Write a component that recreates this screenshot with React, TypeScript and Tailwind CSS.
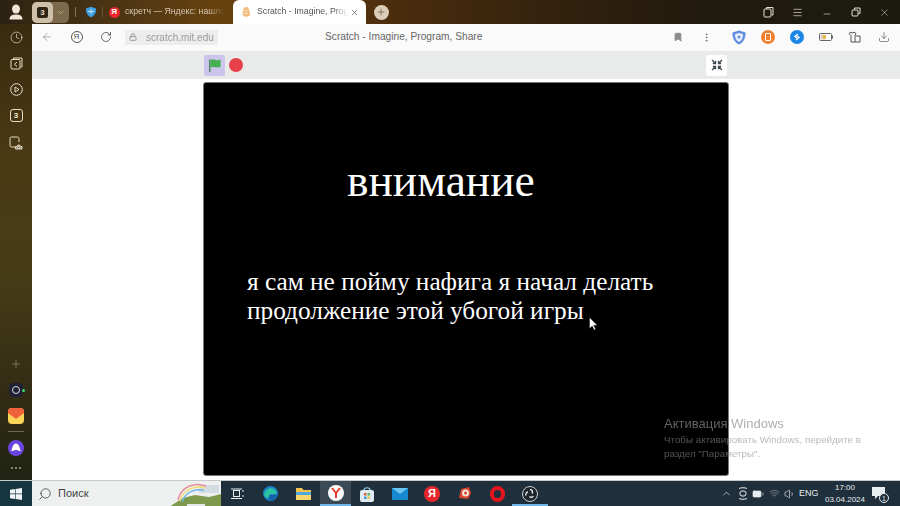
import React from "react";
import { ArrowLeft, RotateCw, Lock, Bookmark, MoreVertical, Download, X, Plus, Minus, Menu, ChevronDown, ChevronUp, Clock, Search, Volume1, Wifi, Battery } from "lucide-react";

function Slot({ w, children, className = "" }: { w: string; children?: React.ReactNode; className?: string }) {
  return <div className={`flex items-center justify-center shrink-0 ${w} ${className}`}>{children}</div>;
}

function SideIcon({ h, children }: { h: string; children: React.ReactNode }) {
  return <div className={`flex items-center justify-center w-full ${h}`}>{children}</div>;
}

function TabBar() {
  return (
    <div className="flex items-stretch h-6 shrink-0 bg-[linear-gradient(90deg,#2c2212_0%,#4a3414_12%,#66420f_24%,#5c3a10_34%,#4a2c0e_44%,#2e1f0d_66%,#1f1a0e_80%,#1c1a10_100%)] text-[#e8e2d6] font-['Liberation_Sans',sans-serif]">
      <Slot w="w-8">
        <svg width="14" height="16" viewBox="0 0 14 16">
          <ellipse cx="7" cy="5" rx="4" ry="4.6" fill="#efe6d8" />
          <path d="M0.5 15.5c0-4 3-5 6.5-5s6.500 1 6.500 5z" fill="#efe6d8" />
        </svg>
      </Slot>
      <div className="flex items-center h-[21px] mt-[2px] w-[37px] rounded-[5px] bg-[#7d6a4c]">
        <div className="w-[21px] h-full rounded-[5px] bg-[#cdbfa8] flex items-center justify-center">
          <span className="w-[11px] h-[11px] rounded-[2px] bg-[#2e2415] text-[#e8dcc8] text-[8px] font-bold flex items-center justify-center">3</span>
        </div>
        <ChevronDown size={9} strokeWidth={2} className="ml-[3px] text-[#cbbda6]" />
      </div>
      <div className="w-px h-[10px] self-center ml-[6px] bg-[#8a7450]" />
      <Slot w="w-[30px]">
        <svg width="12" height="12" viewBox="0 0 12 12">
          <path d="M1 2.500 6 .7l5 1.800c.2 4.200-1.300 7.200-5 8.800C2.300 9.700.800 6.700 1 2.500z" fill="#3fa0df" />
          <path d="M3 5.500h6M6 3v5" stroke="#bfe3f7" strokeWidth="1" />
        </svg>
      </Slot>
      <div className="w-px h-[10px] self-center ml-[-4px] bg-[#6d5230]" />
      <Slot w="w-[22px]">
        <span className="w-[11px] h-[11px] rounded-full bg-[#e8262b] text-white text-[8px] font-bold flex items-center justify-center">Я</span>
      </Slot>
      <div className="flex items-center w-[99px] overflow-hidden whitespace-nowrap text-[8.700px] text-[#d8c8b4] [mask-image:linear-gradient(90deg,#000_85%,transparent)]">скретч — Яндекс: нашлось</div>
      <div className="w-[9px]" />
      <div className="flex items-center w-[133px] h-full rounded-t-[6px] bg-white text-[#555] text-[8.700px] overflow-hidden">
        <svg width="10" height="12" viewBox="0 0 10 12" className="ml-[8px] mr-[6px] shrink-0">
          <path d="M3 1.500 7 1l1.500 4L9 9.500 5 11 1.500 9l.5-4z" fill="#f0bb7c" />
          <path d="M3 5h4M3 7.500h4" stroke="#fbe3c4" strokeWidth="1" />
        </svg>
        <span className="w-[91px] overflow-hidden whitespace-nowrap [mask-image:linear-gradient(90deg,#000_85%,transparent)]">Scratch - Imagine, Program, Share</span>
        <X size={9} strokeWidth={1.8} className="ml-[2px] text-[#555] shrink-0" />
      </div>
      <Slot w="w-[30px]">
        <span className="flex items-center justify-center w-[15px] h-[15px] rounded-full bg-[#dccdb9]">
          <Plus size={10} strokeWidth={1.5} className="text-[#5c4a34]" />
        </span>
      </Slot>
      <div className="flex-1" />
      <div className="flex items-center pr-[1px]">
        <Slot w="w-[29px]">
          <svg width="11" height="12" viewBox="0 0 11 12" fill="none" stroke="#e6e0d4" strokeWidth="1">
            <path d="M3.500 3V1.500h6.500v7.500H8.500" />
            <rect x="1" y="3" width="7" height="8" rx="1" />
          </svg>
        </Slot>
        <Slot w="w-[29px]"><Menu size={11} strokeWidth={1.5} className="text-[#e6e0d4]" /></Slot>
        <Slot w="w-[29px]"><Minus size={10} strokeWidth={1.5} className="text-[#e6e0d4] mt-[3px]" /></Slot>
        <Slot w="w-[29px]">
          <svg width="10" height="10" viewBox="0 0 10 10" fill="none" stroke="#e6e0d4" strokeWidth="1">
            <path d="M3.500 2.500V1h5.500v5.500H7.500" />
            <rect x="1" y="3" width="6" height="6" rx="1" />
          </svg>
        </Slot>
        <Slot w="w-[29px]"><X size={11} strokeWidth={1.2} className="text-[#e6e0d4]" /></Slot>
      </div>
    </div>
  );
}

function Sidebar() {
  const c = "text-[#e6dcc4]";
  return (
    <div className="w-8 shrink-0 flex flex-col bg-[linear-gradient(180deg,#3a2a10_0%,#4a3a14_30%,#473c18_55%,#2f2a14_85%,#1f2412_100%)]">
      <SideIcon h="h-[26px]"><Clock size={13} strokeWidth={1.3} className={c} /></SideIcon>
      <SideIcon h="h-[26px]">
        <svg width="13" height="13" viewBox="0 0 13 13" fill="none" stroke="#e6dcc4" strokeWidth="1">
          <path d="M3.500 2V1h8.500v9h-1.500" />
          <rect x="1" y="2.500" width="9" height="9.500" rx="1" />
          <path d="M7 5 4.500 7.300 7 9.500" />
        </svg>
      </SideIcon>
      <SideIcon h="h-[26px]">
        <svg width="13" height="13" viewBox="0 0 13 13" fill="none" stroke="#e6dcc4" strokeWidth="1">
          <circle cx="6.500" cy="6.500" r="5.800" />
          <path d="M5 4v5l4-2.500z" />
        </svg>
      </SideIcon>
      <SideIcon h="h-[27px]">
        <span className="w-[13px] h-[13px] rounded-[3px] border border-[#e6dcc4] text-[#f0e8d4] text-[8px] font-bold font-['Liberation_Sans',sans-serif] flex items-center justify-center">3</span>
      </SideIcon>
      <SideIcon h="h-[27px]">
        <svg width="14" height="14" viewBox="0 0 14 14" fill="none" stroke="#e6dcc4" strokeWidth="1">
          <path d="M6 11H2.500a1.500 1.500 0 0 1-1.500-1.500V2.500A1.500 1.500 0 0 1 2.500 1h6A1.500 1.500 0 0 1 10 2.500V6" />
          <path d="M6.500 13v-2.500h1.500l1-1.500h1.500l1 1.500H13V13z" fill="#8f8a7a" />
          <circle cx="9.800" cy="11.300" r="1" fill="#2a2614" />
        </svg>
      </SideIcon>
      <div className="flex-1" />
      <SideIcon h="h-[26px]"><Plus size={12} strokeWidth={1} className="text-[#b5ae96]" /></SideIcon>
      <SideIcon h="h-[26px]">
        <span className="relative flex items-center justify-center w-[14px] h-[14px] rounded-[4px] bg-[#1f2130]">
          <span className="w-[8px] h-[8px] rounded-full border-[1.5px] border-[#d9dcec]" />
          <span className="absolute right-[-2px] w-[3px] h-[3px] rounded-full bg-[#3cd96b]" />
        </span>
      </SideIcon>
      <SideIcon h="h-[25px]">
        <svg width="16" height="16" viewBox="0 0 16 16">
          <rect width="16" height="16" rx="4" fill="#fbd45a" />
          <path d="M0 4a4 4 0 0 1 4-4h8a4 4 0 0 1 4 4v1l-8 6-8-6z" fill="#f0603a" />
        </svg>
      </SideIcon>
      <div className="w-[16px] h-px self-center bg-[#6b6a50] my-[3px]" />
      <SideIcon h="h-[26px]">
        <svg width="16" height="16" viewBox="0 0 16 16">
          <circle cx="8" cy="8" r="8" fill="#6a46e0" />
          <path d="M8 3.500c2.300 0 3.500 3 4.500 7 .2.800-.5 1-1 .6C10.500 10.400 9.300 10 8 10s-2.500.400-3.500 1.100c-.5.400-1.200.2-1-.6 1-4 2.200-7 4.500-7z" fill="#fff" />
        </svg>
      </SideIcon>
      <SideIcon h="h-[14px]">
        <span className="flex gap-[2px]">
          <span className="w-[2px] h-[2px] rounded-full bg-[#a8a48e]" />
          <span className="w-[2px] h-[2px] rounded-full bg-[#a8a48e]" />
          <span className="w-[2px] h-[2px] rounded-full bg-[#a8a48e]" />
        </span>
      </SideIcon>
      <div className="h-[5px]" />
    </div>
  );
}

function Toolbar() {
  return (
    <div className="flex items-center h-[26px] shrink-0 bg-[#fafafa] rounded-tl-[5px] rounded-tr-[5px] font-['Liberation_Sans',sans-serif]">
      <Slot w="w-[30px]"><ArrowLeft size={12} strokeWidth={1} className="text-[#666]" /></Slot>
      <Slot w="w-[29px]">
        <span className="w-[12px] h-[12px] rounded-full border border-[#555] text-[#555] text-[8px] flex items-center justify-center">Я</span>
      </Slot>
      <Slot w="w-[29px]"><RotateCw size={12} strokeWidth={1.4} className="text-[#333]" /></Slot>
      <div className="flex items-center w-[93px] h-[15px] ml-[5px] bg-[#ededed] text-[#9a9a9a] text-[10px] whitespace-nowrap">
        <Lock size={8} strokeWidth={2.5} className="ml-[4px] mr-[9px] text-[#8d8d8d]" />
        <span className="blur-[0.4px]">scratch.mit.edu</span>
      </div>
      <div className="w-[107px]" />
      <span className="text-[10.200px] text-[#666] w-[159px] whitespace-nowrap">Scratch - Imagine, Program, Share</span>
      <div className="flex-1" />
      <Slot w="w-[29px]"><Bookmark size={10} strokeWidth={2} fill="#8a8a8a" className="text-[#8a8a8a]" /></Slot>
      <Slot w="w-[29px]"><MoreVertical size={11} strokeWidth={1.5} className="text-[#555]" /></Slot>
      <div className="w-[3px]" />
      <Slot w="w-[29px]">
        <svg width="14" height="15" viewBox="0 0 14 15">
          <path d="M7 .5 13.500 2.500c.3 5.500-2 10-6.500 12C2.500 12.500.200 8 .500 2.500z" fill="#5f8be0" />
          <path d="M7 3 11 4.200c.1 3.600-1.200 6.500-4 7.900C4.200 10.700 2.900 7.800 3 4.200z" fill="#e8effb" />
          <circle cx="7" cy="7" r="1.500" fill="#5f8be0" />
        </svg>
      </Slot>
      <Slot w="w-[29px]">
        <span className="w-[14px] h-[14px] rounded-full bg-[#ef8233] flex items-center justify-center">
          <span className="w-[6px] h-[8px] rounded-[1px] border-[1.5px] border-white" />
        </span>
      </Slot>
      <Slot w="w-[29px]">
        <span className="w-[14px] h-[14px] rounded-full bg-[#1a86e8] flex items-center justify-center">
          <svg width="8" height="8" viewBox="0 0 8 8" fill="none" stroke="#fff" strokeWidth="1.400">
            <path d="M5 1 2 3.500 4 5M3 7l3-2.500L4 3" />
          </svg>
        </span>
      </Slot>
      <Slot w="w-[29px]">
        <svg width="14" height="8" viewBox="0 0 14 8">
          <rect x=".5" y=".5" width="12" height="7" rx="1" fill="#fff" stroke="#666" />
          <rect x="1.500" y="1.500" width="5" height="5" fill="#d9d2c2" />
          <rect x="4" y="2.500" width="3" height="3" fill="#f0b428" />
          <rect x="13" y="2.500" width="1" height="3" fill="#666" />
        </svg>
      </Slot>
      <Slot w="w-[29px]">
        <svg width="13" height="13" viewBox="0 0 13 13" fill="none" stroke="#555" strokeWidth="1">
          <path d="M1 2.500 3 1l1 1h1l1-1 2 1.500-1 2v6.500H3V4.500z" />
          <path d="M7.500 5H12v6H7" />
        </svg>
      </Slot>
      <Slot w="w-[29px]"><Download size={12} strokeWidth={1.2} className="text-[#444]" /></Slot>
      <div className="w-[2px]" />
    </div>
  );
}

function Controls() {
  return (
    <div className="flex items-center h-[29px] shrink-0 bg-[#e9ebeb] border-t border-[#f8f8f8] pl-[172px] pr-[173px]">
      <div className="flex items-center justify-center w-[21px] h-[21px] rounded-[2px] bg-[#cbc5ec]">
        <svg width="15" height="15" viewBox="0 0 15 15">
          <path d="M2 1.500h1.500V14H2z" fill="#4d8a63" />
          <path d="M3.500 2c3-1.300 5 1 8 0l2-.5v7.500c-3 1.300-6.500-.8-10 .5z" fill="#45b04f" />
        </svg>
      </div>
      <div className="w-[14px] h-[14px] ml-[4px] rounded-full bg-[#e8404a]" />
      <div className="flex-1" />
      <div className="flex items-center justify-center w-[21px] h-[21px] rounded-[2px] bg-white">
        <svg width="12" height="12" viewBox="0 0 12 12" fill="none" stroke="#3c4a50" strokeWidth="1.300">
          <path d="M1 1l3.500 3.500M4.500 1.800v2.700H1.800M11 1 7.500 4.500M7.500 1.800v2.700h2.700M1 11l3.500-3.500M4.500 10.200V7.500H1.800M11 11 7.500 7.500M7.500 10.200V7.500h2.700" />
        </svg>
      </div>
    </div>
  );
}

function Stage() {
  return (
    <div className="relative flex-1 bg-white pt-[3px] pb-[4px] pl-[171px] pr-[171px] min-h-0">
      <div className="relative h-full w-full rounded-[3px] bg-black border border-[#777] font-['Liberation_Serif',serif] text-white">
        <div className="pt-[75px] pl-[143px] text-[45.500px] leading-[46px]">внимание</div>
        <div className="pt-[63px] pl-[43px] text-[25.300px] leading-[28.500px] whitespace-nowrap">
          <div>я сам не пойму нафига я начал делать</div>
          <div>продолжение этой убогой игры</div>
        </div>
        <svg width="9" height="14" viewBox="0 0 9 14" className="absolute left-[385px] top-[234px]">
          <path d="M.5.500v11l2.700-2.500 1.800 4 1.600-.7-1.800-4h3.500z" fill="#fff" stroke="#222" strokeWidth=".5" />
        </svg>
      </div>
      <div className="absolute left-[632px] top-[337px] font-['Liberation_Sans',sans-serif] text-[#8c8c8c] w-[220px]">
        <div className="text-[13px] leading-[16px] opacity-70">Активация Windows</div>
        <div className="mt-[1px] text-[9.800px] leading-[14px] opacity-60">
          Чтобы активировать Windows, перейдите в
          <br />
          раздел "Параметры".
        </div>
      </div>
    </div>
  );
}

function Taskbar() {
  return (
    <div className="flex items-stretch h-[26px] shrink-0 bg-[#1f2f3b] border-t border-[#c5c9cb] font-['Liberation_Sans',sans-serif]">
      <Slot w="w-8" className="bg-[#173540]">
        <svg width="12" height="12" viewBox="0 0 12 12" fill="#f2f5f7">
          <path d="M0 1.700 5 1v4.600H0zM5.600.9 12 0v5.600H5.600zM0 6.200h5v4.700l-5-.700zM5.600 6.200H12V12l-6.400-.9z" />
        </svg>
      </Slot>
      <div className="relative flex items-center w-[189px] bg-[#eef0f0] text-[#444] text-[11px] overflow-hidden">
        <Search size={14} strokeWidth={1.3} className="ml-[6px] mr-[6px] -scale-x-100 text-[#333]" />
        <span>Поиск</span>
        <svg width="52" height="26" viewBox="0 0 52 26" fill="none" className="absolute right-0 top-0">
          <path d="M0 26 14 17l12-3 14 2 12-3v13z" fill="#7e9a4c" />
          <path d="M30 4h20v8H30z" fill="#d5dbe2" />
          <path d="M9 19C12 5 26 1 37 5" stroke="#e88fa0" strokeWidth="1.500" />
          <path d="M11 20C14 8 26 4 36 7" stroke="#f0dc70" strokeWidth="1.500" />
          <path d="M13 21C16 11 26 7 35 9.500" stroke="#72b6e6" strokeWidth="1.500" />
          <path d="M18 23h18v2H18z" fill="#e4e8e8" />
        </svg>
      </div>
      <Slot w="w-[32px]">
        <svg width="13" height="12" viewBox="0 0 13 12" fill="none" stroke="#e8edf0" strokeWidth="1">
          <rect x="2.500" y="2.500" width="6" height="6" />
          <path d="M0 1h11M0 10.500h11M12 2v2M12 7v2" />
        </svg>
      </Slot>
      <Slot w="w-[34px]">
        <svg width="15" height="15" viewBox="0 0 15 15">
          <circle cx="7.500" cy="7.500" r="7.500" fill="#1a83c8" />
          <path d="M1 9C2 4 6 1.500 9.500 2.500c3 1 4.500 3.500 4 6h-6C6 8.500 6 10 7.500 11.500 5 12.500 2 11.500 1 9z" fill="#2cc4a0" />
          <path d="M7 8.500h7c-.5 3-3 6-6.500 6-2 0-2.500-3-.500-6z" fill="#1565ad" />
        </svg>
      </Slot>
      <Slot w="w-[33px]">
        <svg width="15" height="13" viewBox="0 0 15 13">
          <path d="M0 1h6l1.500 2H15v10H0z" fill="#f0c24a" />
          <path d="M0 5h15v3H0z" fill="#4fa7dc" />
          <path d="M0 8h15v5H0z" fill="#f5d56e" />
        </svg>
      </Slot>
      <Slot w="w-[31px]" className="bg-[#3b4a55] border-b-2 border-[#6fb6e8]">
        <span className="w-[16px] h-[16px] rounded-full bg-white flex items-center justify-center">
          <svg width="10" height="11" viewBox="0 0 10 11" fill="none" stroke="#e63b2e" strokeWidth="2">
            <path d="M1 1l4 5 4-5M5 6v5" />
          </svg>
        </span>
      </Slot>
      <Slot w="w-[32px]">
        <svg width="16" height="16" viewBox="0 0 16 16">
          <path d="M5 4c0-3 6-3 6 0" fill="none" stroke="#8fd0f0" strokeWidth="1.200" />
          <rect x="1" y="4" width="14" height="12" rx="2" fill="#dfeaf2" />
          <rect x="5" y="7" width="2.500" height="2.500" fill="#e85a3c" />
          <rect x="8.500" y="7" width="2.500" height="2.500" fill="#5cb85c" />
          <rect x="5" y="10.500" width="2.500" height="2.500" fill="#3c9be0" />
          <rect x="8.500" y="10.500" width="2.500" height="2.500" fill="#f0c24a" />
        </svg>
      </Slot>
      <Slot w="w-[33px]">
        <svg width="16" height="13" viewBox="0 0 16 13">
          <rect y="1" width="16" height="12" fill="#1588d0" />
          <path d="M0 1h16L8 7z" fill="#6cc4f0" />
        </svg>
      </Slot>
      <Slot w="w-[32px]">
        <span className="w-[16px] h-[16px] rounded-full bg-[#e8262b] text-white text-[11px] font-bold flex items-center justify-center">Я</span>
      </Slot>
      <Slot w="w-[33px]">
        <svg width="15" height="15" viewBox="0 0 15 15">
          <path d="M2 12 4 3l8-2 2 6-3 6z" fill="#d9432f" />
          <circle cx="8.500" cy="7" r="3.500" fill="#f3e6d6" />
          <circle cx="8.500" cy="7" r="1.500" fill="#d9432f" />
        </svg>
      </Slot>
      <Slot w="w-[33px]">
        <span className="w-[15px] h-[16px] rounded-full border-[4px] border-[#e3161f]" />
      </Slot>
      <Slot w="w-[32px]" className="relative">
        <svg width="16" height="16" viewBox="0 0 16 16" fill="none">
          <circle cx="8" cy="8" r="7.500" fill="#20262c" stroke="#c8ccd0" />
          <path d="M8 3.500a2.500 2.500 0 0 1 2 4M11.500 10a2.500 2.500 0 0 1-4 .5M4 9.500a2.500 2.500 0 0 1 2-3.500" stroke="#e8ecef" strokeWidth="1.400" />
        </svg>
        <span className="absolute bottom-0 left-[-2px] right-[-2px] h-[2px] bg-[#6fb6e8]" />
      </Slot>
      <div className="flex-1" />
      <div className="flex items-center text-[#e8edf0]">
        <ChevronUp size={11} strokeWidth={1.5} />
        <Slot w="w-[15px]" className="ml-[3px]">
          <svg width="10" height="13" viewBox="0 0 10 13" fill="none" stroke="#e8edf0" strokeWidth="1">
            <path d="M1 1.500c2-1 6-1 8 0M1 11.500c2 1 6 1 8 0" />
            <rect x="2" y="4" width="6" height="5" rx="2" />
          </svg>
        </Slot>
        <Slot w="w-[16px]"><Battery size={12} strokeWidth={1.3} fill="#e8edf0" /></Slot>
        <Slot w="w-[16px]"><Wifi size={11} strokeWidth={1.3} className="text-[#a9b2b8]" /></Slot>
        <Slot w="w-[15px]"><Volume1 size={12} strokeWidth={1.3} /></Slot>
        <span className="ml-[2px] text-[9px] w-[20px] whitespace-nowrap">ENG</span>
        <div className="ml-[4px] w-[44px] text-center text-[8px] leading-[12px]">
          <div>17:00</div>
          <div>03.04.2024</div>
        </div>
        <div className="relative w-[14px] h-[13px] ml-[5px] mr-[14px]">
          <svg width="13" height="12" viewBox="0 0 13 12" fill="#e8edf0">
            <path d="M0 0h13v9H6l-3 3V9H0z" />
          </svg>
          <span className="absolute right-[-3px] bottom-[-3px] flex items-center justify-center w-[10px] h-[10px] rounded-full bg-[#1f2f3b] border border-[#e8edf0] text-[7px] leading-none">1</span>
        </div>
      </div>
    </div>
  );
}

export default function App() {
  return (
    <div className="w-[900px] h-[506px] overflow-hidden flex flex-col bg-[#2c2212]">
      <TabBar />
      <div className="flex flex-1 min-h-0 overflow-hidden">
        <Sidebar />
        <div className="flex flex-col flex-1 min-w-0 bg-[#fff]">
          <Toolbar />
          <Controls />
          <Stage />
        </div>
      </div>
      <Taskbar />
    </div>
  );
}
